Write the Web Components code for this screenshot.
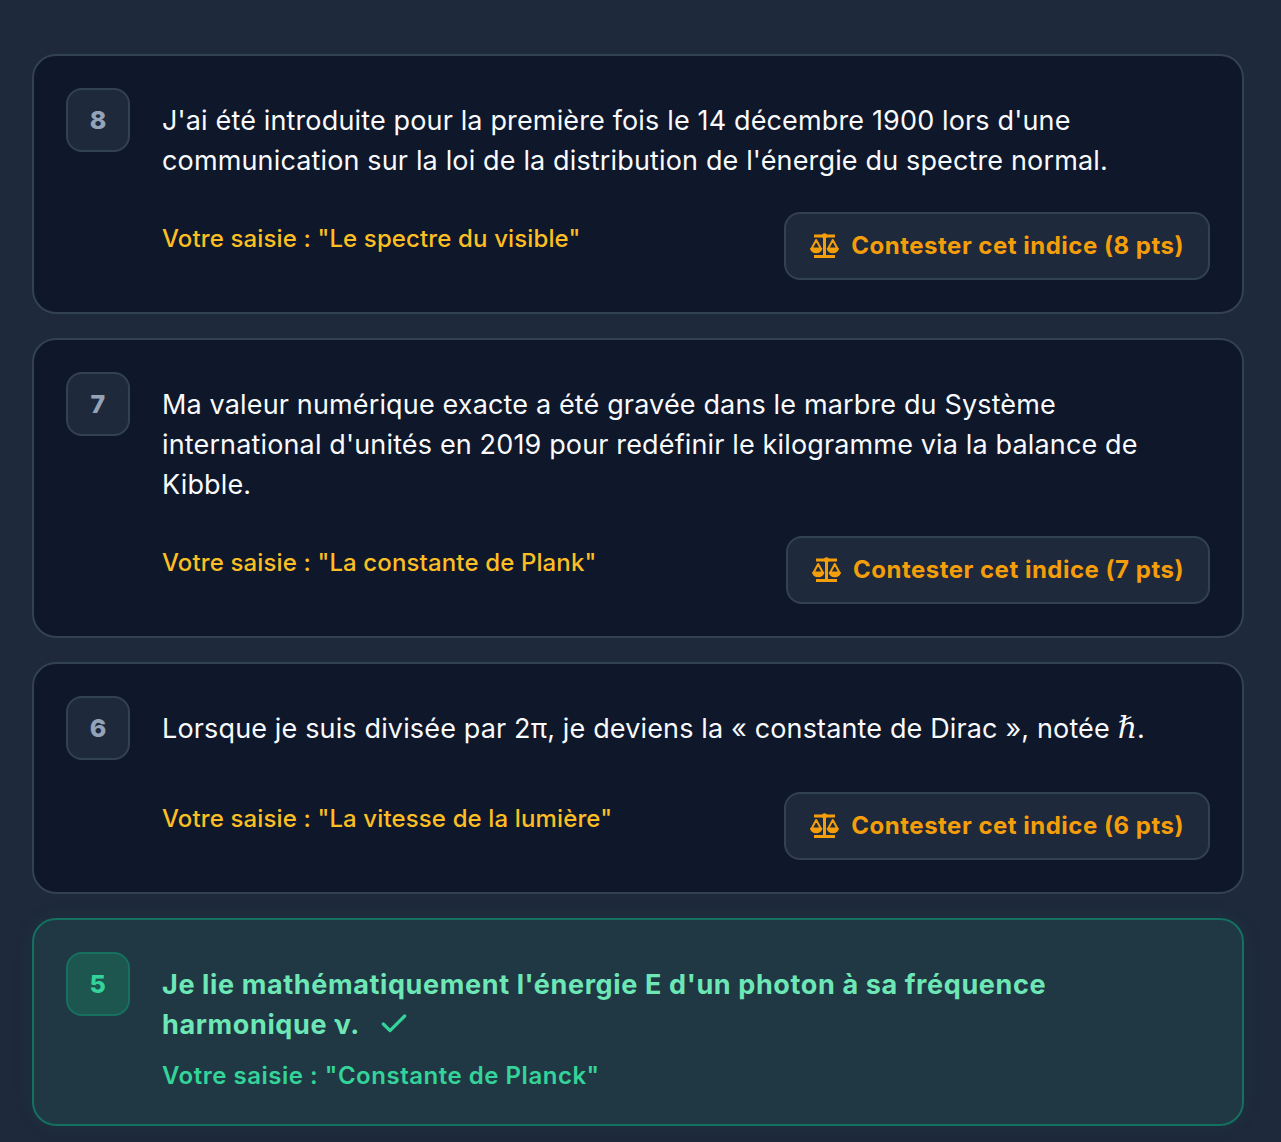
<!DOCTYPE html>
<html lang="fr">
<head>
<meta charset="utf-8">
<title>Indices</title>
<style>
  html, body { margin: 0; padding: 0; background: #1e293b; }
  body { font-family: Inter, "Liberation Sans", sans-serif; }
</style>
</head>
<body>
<clue-list>
  <clue-card number="8" guess="Le spectre du visible" points="8">J'ai été introduite pour la première fois le 14 décembre 1900 lors d'une communication sur la loi de la distribution de l'énergie du spectre normal.</clue-card>
  <clue-card number="7" guess="La constante de Plank" points="7">Ma valeur numérique exacte a été gravée dans le marbre du Système international d'unités en 2019 pour redéfinir le kilogramme via la balance de Kibble.</clue-card>
  <clue-card number="6" guess="La vitesse de la lumière" points="6">Lorsque je suis divisée par 2π, je deviens la « constante de Dirac », notée <hbar-sign></hbar-sign>.</clue-card>
  <clue-card number="5" guess="Constante de Planck" solved>Je lie mathématiquement l'énergie E d'un photon à sa fréquence harmonique ν.</clue-card>
</clue-list>

<script>
class ClueList extends HTMLElement {
  constructor() {
    super();
    this.attachShadow({ mode: "open" });
    this.shadowRoot.innerHTML = `
      <style>
        :host {
          display: flex;
          flex-direction: column;
          gap: 24px;
          padding: 54px 37px 16px 32px;
        }
      </style>
      <slot></slot>
    `;
  }
}

class HbarSign extends HTMLElement {
  constructor() {
    super();
    this.attachShadow({ mode: "open" });
    // the formula makes its line taller, only downwards
    this.shadowRoot.innerHTML = `
      <style>
        :host {
          display: inline-block;
          margin-bottom: 18.3px;
          font-family: "Liberation Serif", "DejaVu Serif", serif;
          font-style: italic;
          font-size: 30px;
          line-height: 30px;
          letter-spacing: 0;
        }
      </style>ℏ`;
  }
}

class DisputeButton extends HTMLElement {
  constructor() {
    super();
    this.attachShadow({ mode: "open" });
    this.shadowRoot.innerHTML = `
      <style>
        :host {
          display: inline-flex;
          flex: none;
          align-items: center;
          gap: 11px;
          box-sizing: border-box;
          height: 68px;
          padding: 0 24px;
          border: 2px solid #334155;
          border-radius: 16px;
          background: #1e293b;
          color: #f59e0b;
          font-size: 24px;
          font-weight: 700;
          letter-spacing: .5px;
          white-space: nowrap;
        }
        svg { width: 30px; height: 26px; display: block; margin-top: -1px; }
      </style>
      <svg viewBox="0 0 30 26" fill="none" stroke="currentColor" stroke-linejoin="round">
        <path d="M4 3h21M14.5 3v20M4 23.5h21" stroke-width="3"/>
        <circle cx="14.5" cy="2.8" r="2.6" fill="currentColor" stroke="none"/>
        <path d="M6.2 7 1.6 15.5h9.2zM22.8 7l-4.6 8.5h9.2z" stroke-width="2"/>
        <path d="M0 15h12.4a6.2 5.2 0 0 1-12.4 0zM16.6 15H29a6.2 5.2 0 0 1-12.4 0z" fill="currentColor" stroke="none"/>
      </svg>
      <slot></slot>
    `;
  }
}

class ClueCard extends HTMLElement {
  constructor() {
    super();
    this.attachShadow({ mode: "open" });
    this.shadowRoot.innerHTML = `
      <style>
        :host {
          display: flex;
          gap: 32px;
          box-sizing: border-box;
          padding: 32px;
          border: 2px solid #334155;
          border-radius: 24px;
          background: #0f172a;
          color: #f8fafc;
          font-size: 27px;
          letter-spacing: .145px;
          line-height: 40px;
        }
        :host([solved]) {
          border-color: #14705f;
          background: #1f3844;
          box-shadow: 0 0 24px rgba(16, 185, 129, .06);
          color: #6ee7b7;
          font-weight: 700;
          letter-spacing: .62px;
        }
        .num {
          flex: none;
          display: flex;
          align-items: center;
          justify-content: center;
          box-sizing: border-box;
          width: 64px;
          height: 64px;
          border: 2px solid #334155;
          border-radius: 16px;
          background: #1e293b;
          color: #94a3b8;
          font-size: 25px;
          font-weight: 800;
        }
        :host([solved]) .num {
          border-color: #17705f;
          background: #1c564f;
          color: #34d399;
        }
        .body { flex: 1; min-width: 0; padding-top: 13px; }
        .check { display: none; width: 32px; height: 32px; margin-left: 18px; vertical-align: -6px; color: #34d399; }
        :host([solved]) .check { display: inline-block; }
        .foot {
          display: flex;
          justify-content: space-between;
          align-items: flex-start;
          gap: 24px;
          margin-top: 31px;
        }
        :host([solved]) .foot { margin-top: 15px; }
        .guess { padding-top: 9px; font-size: 24px; line-height: 36px; font-weight: 500; letter-spacing: .13px; color: #fbbf24; }
        :host([solved]) .guess { padding-top: 0; line-height: 32px; font-weight: 600; letter-spacing: .52px; color: #34d399; }
      </style>
      <div class="num"></div>
      <div class="body">
        <div class="text"><slot></slot><svg class="check" viewBox="0 0 24 24" fill="none" stroke="currentColor" stroke-width="2.4" stroke-linecap="round" stroke-linejoin="round"><path d="M20 6 9 17l-5-5"/></svg></div>
        <div class="foot"><div class="guess"></div></div>
      </div>
    `;
  }

  connectedCallback() {
    this.shadowRoot.querySelector(".num").textContent = this.getAttribute("number");
    this.shadowRoot.querySelector(".guess").textContent = `Votre saisie : "${this.getAttribute("guess")}"`;

    if (!this.hasAttribute("solved")) {
      const btn = document.createElement("dispute-button");
      btn.textContent = `Contester cet indice (${this.getAttribute("points")} pts)`;
      this.shadowRoot.querySelector(".foot").append(btn);
    }
  }
}

customElements.define("clue-list", ClueList);
customElements.define("hbar-sign", HbarSign);
customElements.define("dispute-button", DisputeButton);
customElements.define("clue-card", ClueCard);
</script>
</body>
</html>
